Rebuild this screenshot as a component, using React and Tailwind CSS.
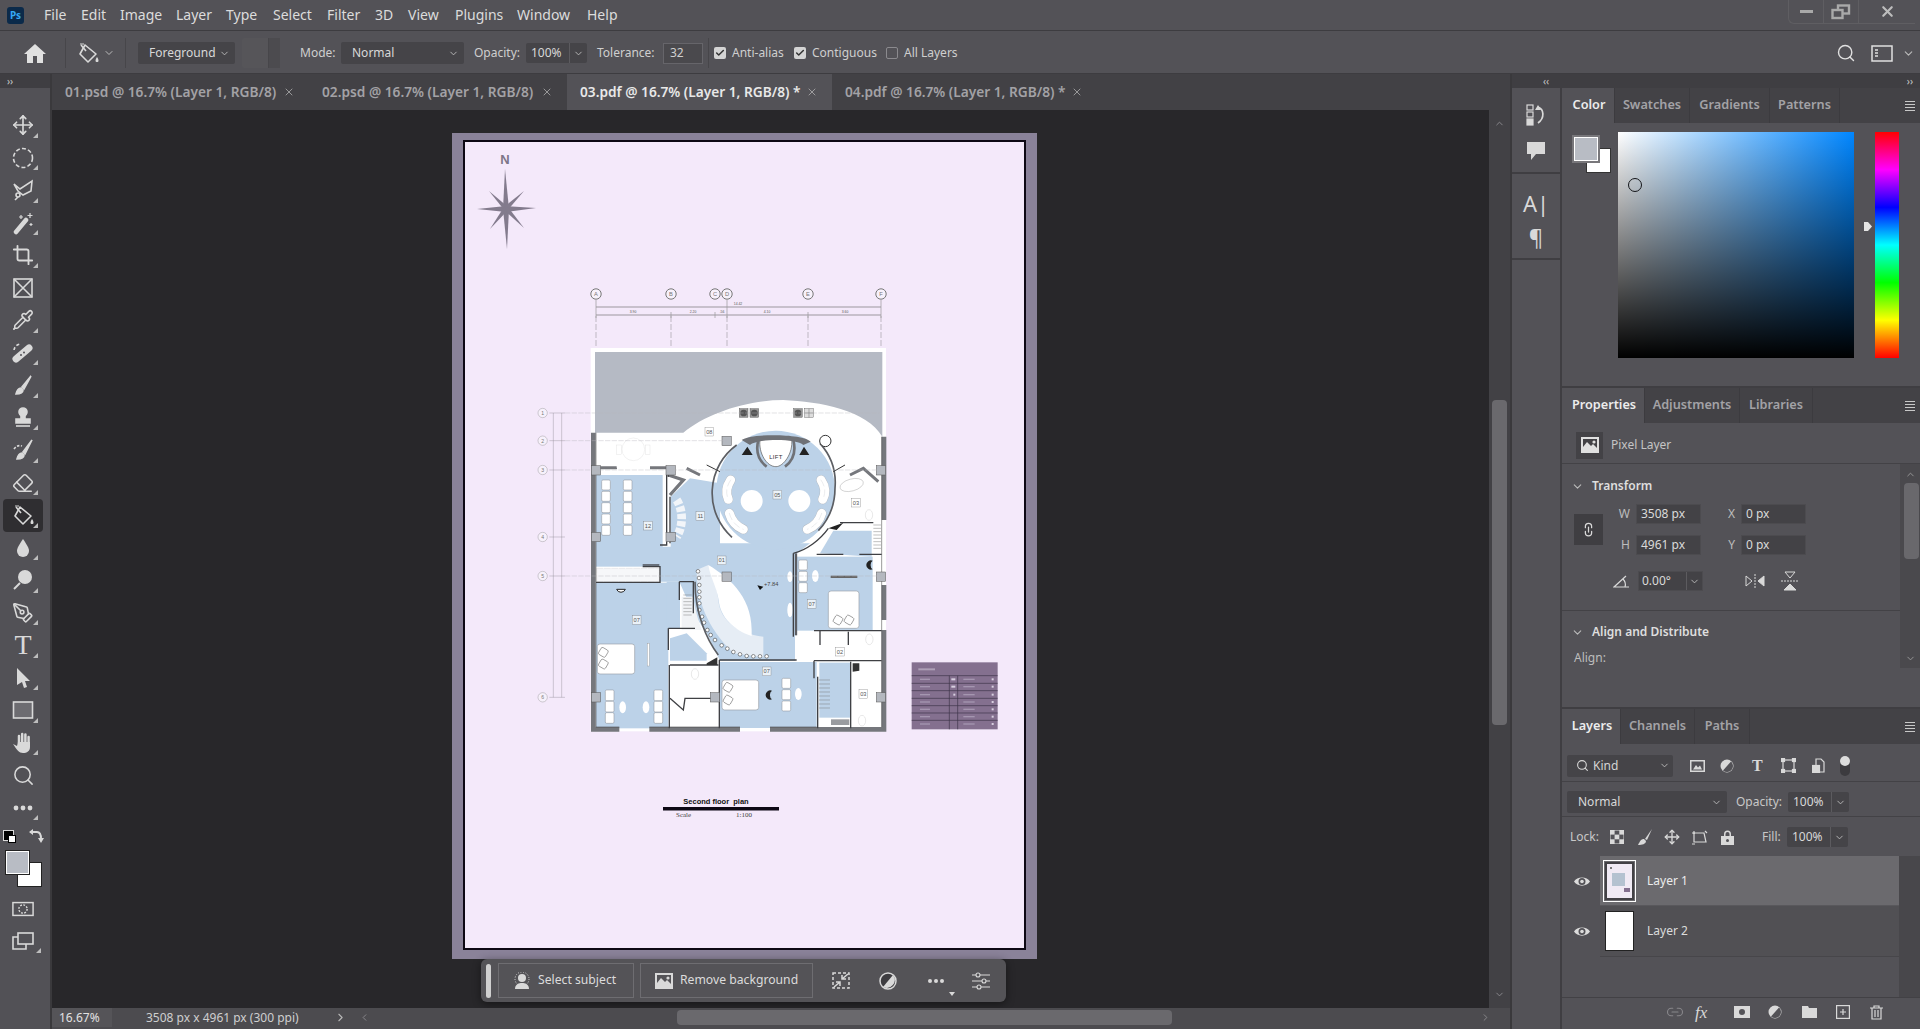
import React from "react";
import { ChevronDown, ChevronUp, ChevronLeft, ChevronRight, X, Move, Crop, Pipette, Eraser, PenTool, Search, Check, Link2 } from "lucide-react";

const menus = ["File", "Edit", "Image", "Layer", "Type", "Select", "Filter", "3D", "View", "Plugins", "Window", "Help"];

const Ic = ({ children, size = 24, view = "0 0 24 24", className = "" }) => (
  <svg width={size} height={size} viewBox={view} fill="none" stroke="#d9d9d9" strokeWidth="1.6" className={className}>
    {children}
  </svg>
);

const bucket = (
  <Ic>
    <path d="M9 4 L20 13 L12 21 L4 13 Z" strokeLinejoin="round" />
    <path d="M5 4 L10 10" />
    <path d="M4 3 L8 3" strokeWidth="1" />
    <path d="M21 16 C23 19 23 21 21 21 C19 21 19 19 21 16 Z" fill="#d9d9d9" stroke="none" />
  </Ic>
);

// left toolbar, top to bottom
const tools = [
  { icon: <Move size={22} color="#d9d9d9" strokeWidth={1.8} />, corner: true },
  { icon: <Ic><circle cx="12" cy="12" r="9.5" strokeDasharray="4 2.2" /></Ic>, corner: true },
  { icon: <Ic><path d="M3 6 L9 11 L21 3 L20 13 L12 17 L7 13 Z" /><circle cx="7" cy="17" r="2" /><path d="M7 19 L4 22" /></Ic>, corner: true },
  { icon: <Ic><path d="M5 21 L15 9" strokeWidth="4.5" strokeLinecap="round" /><path d="M10 4 L10 8 M8 6 L12 6 M19 2 L19 7 M16.5 4.5 L21.5 4.5 M20 12 L20 15 M18.5 13.5 L21.5 13.5" strokeWidth="1.2" /></Ic>, corner: true },
  { icon: <Crop size={22} color="#d9d9d9" strokeWidth={2} />, corner: true },
  { icon: <Ic><rect x="3" y="3" width="18" height="18" /><path d="M3 3 L21 21 M21 3 L3 21" /></Ic> },
  { icon: <Pipette size={22} color="#d9d9d9" strokeWidth={1.7} />, corner: true },
  { icon: <Ic><path d="M5 18 L18 7" strokeWidth="7" strokeLinecap="round" /><path d="M3 9 A7 7 0 0 1 10 3" strokeDasharray="3 2" /><circle cx="10" cy="14" r="1" fill="#525156" stroke="none" /><circle cx="13" cy="11.5" r="1" fill="#525156" stroke="none" /></Ic>, corner: true },
  { icon: <Ic><path d="M20 3 L11 14 L13 16 Z" fill="#d9d9d9" /><path d="M10 15 C7 15 6 17 5 21 C9 21 12 20 12 17 Z" fill="#d9d9d9" /></Ic>, corner: true },
  { icon: <Ic><circle cx="12" cy="6" r="4" fill="#d9d9d9" /><path d="M10 9 H14 V13 H19 V17 H5 V13 H10 Z" fill="#d9d9d9" /><path d="M5 20 H19" /></Ic>, corner: true },
  { icon: <Ic><path d="M21 2 L12 14 L14 16 Z" fill="#d9d9d9" /><path d="M11 15 C8 15 7 17 6 21 C10 21 13 20 13 17 Z" fill="#d9d9d9" /><path d="M3 11 C5 8 8 7 11 8" strokeDasharray="2.5 1.5" /></Ic>, corner: true },
  { icon: <Eraser size={22} color="#d9d9d9" strokeWidth={1.7} />, corner: true },
  { icon: bucket, corner: true, active: true },
  { icon: <Ic><path d="M12 3 C16 9 18 12 18 15 A6 6 0 0 1 6 15 C6 12 8 9 12 3 Z" fill="#d9d9d9" stroke="none" /></Ic>, corner: true },
  { icon: <Ic><circle cx="14" cy="9" r="7" fill="#d9d9d9" stroke="none" /><path d="M9 15 L3 21" strokeWidth="2" /></Ic>, corner: true },
  { icon: <PenTool size={22} color="#d9d9d9" strokeWidth={1.7} />, corner: true },
  { icon: <span className="font-['Liberation_Serif'] text-[28px] leading-none text-[#d9d9d9]">T</span>, corner: true },
  { icon: <Ic><path d="M6 2 L19 15 L14 15 L16 21 L13 22 L11 16 L6 19 Z" fill="#d9d9d9" stroke="none" /></Ic>, corner: true },
  { icon: <Ic><rect x="2.5" y="4" width="19" height="16" fill="#6d6c71" /></Ic>, corner: true },
  { icon: <Ic><path d="M8 12 V5 M11.2 11 V3 M14.4 11 V3.5 M17.6 12 V6" strokeWidth="2.5" strokeLinecap="round" /><path d="M2 13 L6 15 L7 11 H19 V16 C19 20 16 22 12 22 C8 22 6 19 2 13 Z" fill="#d9d9d9" stroke="none" /></Ic>, corner: true },
  { icon: <Search size={23} color="#d9d9d9" strokeWidth={1.6} /> },
  { icon: <Ic><circle cx="5" cy="12" r="2.4" fill="#d9d9d9" stroke="none" /><circle cx="12" cy="12" r="2.4" fill="#d9d9d9" stroke="none" /><circle cx="19" cy="12" r="2.4" fill="#d9d9d9" stroke="none" /></Ic>, corner: true },
];

const Corner = () => (
  <span className="absolute right-[5px] bottom-[4px] h-0 w-0 border-b-[5px] border-l-[5px] border-b-[#bdbdbd] border-l-transparent" />
);

const Toolbar = () => (
  <div className="flex w-[52px] shrink-0 flex-col border-r-2 border-[#3a393c] bg-[#525156]">
    <div className="flex h-[14px] items-center bg-[#3f3e42] pl-[7px] text-[10px] leading-none text-[#c8c8c8]">››</div>
    <div className="h-[21px]" />
    {tools.map((t, i) => (
      <div key={i} className={`relative ml-[3px] flex h-[32.5px] w-[40px] items-center justify-center ${t.active ? "rounded-sm bg-[#2f2e31]" : ""}`}>
        {t.icon}
        {t.corner && <Corner />}
      </div>
    ))}
    {/* colours */}
    <div className="relative h-[63px]">
      <span className="absolute left-[3px] top-[6px] h-[11px] w-[11px] border border-[#d9d9d9] bg-black" />
      <span className="absolute left-[8px] top-[11px] h-[8px] w-[8px] border border-black bg-white" />
      <svg className="absolute left-[28px] top-[4px]" width="16" height="16" viewBox="0 0 16 16" fill="none" stroke="#d9d9d9" strokeWidth="2">
        <path d="M2 4 H9 C12 4 13 7 13 11" />
        <path d="M1 4 L5 1 V7 Z M13 15 L10 10 H16 Z" fill="#d9d9d9" stroke="none" />
      </svg>
      <span className="absolute left-[18px] top-[39px] h-[23px] w-[23px] bg-white shadow-[0_0_0_1px_#222]" />
      <span className="absolute left-[6px] top-[27px] h-[23px] w-[23px] border border-white bg-[#b8bcc4] shadow-[0_0_0_1px_#222]" />
    </div>
    <div className="mt-[6px] flex h-[32px] w-[46px] items-center justify-center">
      <Ic size={22}><rect x="1" y="5" width="22" height="14" /><circle cx="12" cy="12" r="4.5" strokeDasharray="2 1.5" /></Ic>
    </div>
    <div className="relative flex h-[32px] w-[46px] items-center justify-center">
      <Ic size={24}><rect x="7" y="4" width="15" height="11" /><path d="M7 8 H2 V20 H15 V15" /></Ic>
      <Corner />
    </div>
  </div>
);

const Select = ({ className, children }) => (
  <div className={`flex items-center justify-between rounded-[2px] bg-[#454448] pl-[11px] pr-[5px] text-[12px] text-[#d8d8d8] ${className}`}>
    <span>{children}</span>
    <ChevronDown size={11} color="#bbb" />
  </div>
);

const Combo = ({ value, className = "" }) => (
  <div className={`flex h-[20px] items-center rounded-[2px] bg-[#454448] text-[12px] text-[#d8d8d8] ${className}`}>
    <span className="w-[43px] pl-[5px]">{value}</span>
    <span className="flex h-full w-[18px] items-center justify-center border-l border-[#5c5b5f]">
      <ChevronDown size={11} color="#bbb" />
    </span>
  </div>
);

const Box = ({ on, label, className }) => (
  <div className={`flex items-center gap-[6px] ${className}`}>
    <span className={`flex h-[12px] w-[12px] items-center justify-center rounded-[2px] ${on ? "bg-[#d4d4d4]" : "border border-[#8b8a8e]"}`}>
      {on && <Check size={10} color="#333" strokeWidth={3.5} />}
    </span>
    <span>{label}</span>
  </div>
);

const MenuBar = () => (
  <div className="flex h-[31px] shrink-0 items-center border-b border-[#3d3c40] bg-[#535257]">
    <div className="ml-[7px] flex h-[17px] w-[17px] items-center justify-center rounded-[3px] bg-[#0b2a4a] text-[10px] font-bold text-[#35a8f5]">Ps</div>
    <div className="ml-[20px] flex pb-[2px] text-[14px] text-[#dcdcdc]">
      <span className="w-[37px]">File</span>
      <span className="w-[39px]">Edit</span>
      <span className="w-[56px]">Image</span>
      <span className="w-[50px]">Layer</span>
      <span className="w-[47px]">Type</span>
      <span className="w-[54px]">Select</span>
      <span className="w-[48px]">Filter</span>
      <span className="w-[33px]">3D</span>
      <span className="w-[47px]">View</span>
      <span className="w-[62px]">Plugins</span>
      <span className="w-[70px]">Window</span>
      <span>{menus[11]}</span>
    </div>
    <div className="ml-auto mr-[5px] flex h-[24px] self-start rounded-bl-md border-b border-l border-[#5f5e62] text-[#bdbdbd]">
      <div className="flex w-[35px] items-center justify-center border-r border-[#5f5e62]"><span className="h-[3px] w-[13px] bg-[#a9a9a9]" /></div>
      <div className="flex w-[35px] items-center justify-center border-r border-[#5f5e62]">
        <svg width="20" height="16" viewBox="0 0 20 16" fill="none" stroke="#a9a9a9" strokeWidth="2.4"><rect x="7" y="1.5" width="11" height="8" /><rect x="1.5" y="6" width="10" height="8" fill="#535257" /></svg>
      </div>
      <div className="flex w-[56px] items-center justify-center"><X size={17} color="#bdbdbd" strokeWidth={3} /></div>
    </div>
  </div>
);

const OptionsBar = () => (
  <div className="flex h-[43px] shrink-0 items-center border-b border-[#3d3c40] bg-[#535257] pt-[2px] text-[12px] text-[#cfcfcf]">
    <div className="flex w-[66px] justify-center border-r border-[#47464a] py-[5px] pl-[4px]">
      <svg width="22" height="20" viewBox="0 0 22 20" fill="#e0e0e0"><path d="M11 1 L22 11 H19 V20 H13 V13 H9 V20 H3 V11 H0 Z" /></svg>
    </div>
    <div className="ml-[10px]">{bucket}</div>
    <ChevronDown size={12} color="#bbb" className="ml-[3px]" />
    <div className="ml-[10px] h-[30px] w-px bg-[#47464a]" />
    <Select className="ml-[12px] h-[22px] w-[97px]">Foreground</Select>
    <div className="ml-[7px] flex h-[30px] w-[38px] justify-end rounded-[2px] bg-[#565559]">
      <span className="w-[12px] border-l border-[#47464a] bg-[#4c4b4f]" />
    </div>
    <span className="ml-[20px] w-[41px]">Mode:</span>
    <Select className="h-[22px] w-[123px]">Normal</Select>
    <span className="ml-[10px] w-[52px]">Opacity:</span>
    <Combo value="100%" />
    <span className="ml-[10px] w-[66px]">Tolerance:</span>
    <div className="flex h-[21px] w-[40px] items-center border border-[#66656a] bg-[#4a494d] pl-[6px]">32</div>
    <div className="ml-[5px] h-[30px] w-px bg-[#47464a]" />
    <Box on label="Anti-alias" className="ml-[5px] w-[80px]" />
    <Box on label="Contiguous" className="w-[92px]" />
    <Box label="All Layers" />
    <Search size={20} color="#e0e0e0" strokeWidth={1.7} className="ml-auto mr-[15px]" />
    <svg width="22" height="17" viewBox="0 0 22 17" fill="none" stroke="#e0e0e0" strokeWidth="1.5" className="mr-[9px]"><rect x="1" y="1" width="20" height="15" /><path d="M4 5 H7 M4 8 H7 M4 11 H7" strokeWidth="1.6" /></svg>
    <ChevronDown size={13} color="#bbb" className="mr-[5px]" />
  </div>
);

const docTabs = [
  { name: "01.psd @ 16.7% (Layer 1, RGB/8)", w: "w-[257px]" },
  { name: "02.psd @ 16.7% (Layer 1, RGB/8)", w: "w-[258px]" },
  { name: "03.pdf @ 16.7% (Layer 1, RGB/8) *", w: "w-[265px]", active: true },
  { name: "04.pdf @ 16.7% (Layer 1, RGB/8) *", w: "w-[265px]" },
];

const DocTabs = () => (
  <div className="flex h-[36px] shrink-0 bg-[#424145] text-[13.7px] font-semibold">
    {docTabs.map((t) => (
      <div key={t.name} className={`flex items-center justify-between pl-[13px] pr-[14px] ${t.w} ${t.active ? "bg-[#535257] text-[#e8e8e8]" : "text-[#a3a2a6]"}`}>
        <span className="whitespace-nowrap">{t.name}</span>
        <X size={12} color="#b5b5b5" strokeWidth={1.5} />
      </div>
    ))}
  </div>
);

const wallLines = [
  "M228 205 H290 M390 205 H445 M445 205 V230 M440 225 V435 H420 M450 290 V430",
  "M228 547 H420 V500 H368 M420 500 V547 M478 545 V600 M478 545 H520 V640",
  "M445 685 H525 M445 685 V750 M448 795 V985 M450 795 H595 M598 780 H830 M598 780 V985",
  "M820 460 V710 M820 460 C860 450 900 420 925 385 M890 463 H970 M1018 463 H1085",
  "M882 692 H1085 M900 692 V735 M985 695 V735 M882 782 H1085 M882 782 V835 M893 830 V985 M992 785 V985",
  "M450 895 L490 930 L495 895 H575",
  "M368 495 H418",
  "M960 368 H1060",
];

const Sofa = ({ d }) => (
  <g fill="none" strokeLinecap="round">
    <path d={d} stroke="#b0b5bc" strokeWidth="29" />
    <path d={d} stroke="#fff" strokeWidth="27" />
    <path d={d} stroke="#d6d9dd" strokeWidth="1.5" strokeDasharray="20 12" />
  </g>
);

const Bed = ({ x, y, w, h, pillows }) => (
  <g>
    <rect x={x} y={y} width={w} height={h} rx="8" fill="#fff" stroke="#9aa0a8" strokeWidth="2" />
    {pillows.map((p, i) => (
      <rect key={i} x={p[0]} y={p[1]} width="24" height="24" rx="5" fill="#fff" stroke="#555" strokeWidth="1.5" transform={`rotate(30 ${p[0] + 12} ${p[1] + 12})`} />
    ))}
  </g>
);

const Chairs = ({ x, y, n, step = 34, w = 26, h = 30 }) => (
  <g fill="#fff" stroke="#8b9097" strokeWidth="1.6">
    {Array.from({ length: n }).map((_, i) => (
      <rect key={i} x={x} y={y + i * step} width={w} height={h} rx="4" />
    ))}
  </g>
);

const Col = ({ x, y, s = 28 }) => <rect x={x - s / 2} y={y - s / 2} width={s} height={s} fill="#b4b8bf" stroke="#555" strokeWidth="1.5" />;

const Label = ({ x, y, t }) => (
  <g>
    <rect x={x - 13} y={y - 13} width="26" height="26" fill="#fff" fillOpacity="0.7" stroke="#777" strokeWidth="1" />
    <text x={x} y={y + 6} textAnchor="middle" fontSize="17" fill="#555" fontFamily="Liberation Sans, sans-serif">{t}</text>
  </g>
);

const Bubble = ({ x, y, r = 13, t }) => (
  <g>
    <circle cx={x} cy={y} r={r} fill="#f7f1fb" stroke="#777" strokeWidth="1" />
    <text x={x} y={y + r * 0.4} textAnchor="middle" fontSize={r * 1.1} fill="#777" fontFamily="Liberation Sans, sans-serif">{t}</text>
  </g>
);

const FloorPlan = () => (
  <svg width="559" height="806" viewBox="465 142 559 806" className="block">
    <rect x="465" y="142" width="559" height="806" fill="#f4e9fa" />
    {/* north star */}
    <text x="505" y="164" textAnchor="middle" fontSize="13" fontWeight="700" fill="#7d7688" fontFamily="Liberation Sans, sans-serif">N</text>
    <g fill="#837b8d">
      <path d="M505 169 L509 209 L507 249 L503 209 Z" />
      <path d="M477 209 L506 206 L536 208 L506 212 Z" />
      <path d="M489 191 L508 207 L505 211 Z" />
      <path d="M524 191 L504 207 L507 211 Z" />
      <path d="M490 229 L504 207 L508 210 Z" />
      <path d="M524 228 L504 210 L508 207 Z" />
    </g>
    {/* column grid, top */}
    <g stroke="#a7a3ab" strokeWidth="0.7" fill="none">
      <path d="M596 307 H881 M596 315 H881" stroke="#777" />
      <path d="M596 316 V352 M671 316 V352 M727 316 V480 M808 316 V440 M881 316 V352" strokeDasharray="6 2" />
      <path d="M596 300 V318 M671 312 V318 M715 312 V318 M727 300 V318 M808 312 V318 M881 300 V318" stroke="#999" />
    </g>
    {[["A", 596], ["B", 671], ["C", 715], ["D", 727], ["E", 808], ["F", 881]].map((b) => (
      <Bubble key={b[0]} x={b[1]} y={294} r={5.2} t={b[0]} />
    ))}
    <g fontSize="3.4" fill="#555" fontFamily="Liberation Sans, sans-serif" textAnchor="middle">
      <text x="738" y="305">14.42</text>
      <text x="633" y="313">3.90</text>
      <text x="693" y="313">2.20</text>
      <text x="722" y="313">.56</text>
      <text x="767" y="313">4.10</text>
      <text x="845" y="313">3.60</text>
    </g>

    {/* plan traced in 3x coordinates of the crop */}
    <g transform="translate(520 400) scale(0.33333)">
      <rect x="212" y="-156" width="886" height="1150" fill="#fff" />
      <path d="M225 -144 H1087 V110 C1040 30 900 5 790 0 C680 0 560 40 490 98 H225 Z" fill="#b5bac4" />

      <g fill="#bcd2e8">
        <rect x="228" y="225" width="200" height="275" />
        <path d="M420 440 H452 V290 L510 235 L600 250 V430 H870 L825 465 V782 H600 L560 700 L520 640 L478 545 H420 Z" />
        <circle cx="767" cy="270" r="178" />
        <rect x="228" y="548" width="217" height="437" />
        <rect x="440" y="545" width="40" height="140" />
        <rect x="600" y="786" width="290" height="198" />
        <rect x="828" y="470" width="230" height="222" />
        <path d="M900 460 L940 392 H1055 V470 Z" />
        <rect x="898" y="788" width="92" height="165" />
        <path d="M450 715 L500 700 L560 760 V782 H450 Z" />
      </g>

      {/* white bits on the floor */}
      <rect x="230" y="505" width="188" height="40" fill="#f6f7f9" stroke="#ccc" strokeDasharray="20 2" />
      <path d="M485 590 H520 C525 630 535 660 545 690 H485 Z" fill="#f1f3f6" />
      <path d="M530 510 C530 600 560 680 640 760 L730 772 L730 710 C650 700 600 660 595 600 C590 560 580 520 565 495 Z" fill="#e6edf5" />
      <path d="M565 495 C640 540 700 600 695 708 C640 690 600 650 596 600 C590 560 570 530 565 495 Z" fill="#fff" />
      <path d="M720 118 H815 C820 160 790 200 768 200 C740 200 715 160 720 118 Z" fill="#fff" stroke="#555" strokeWidth="2" />
      <text x="768" y="178" textAnchor="middle" fontSize="18" fill="#333" fontFamily="Liberation Sans, sans-serif" letterSpacing="1">LIFT</text>
      <circle cx="695" cy="303" r="33" fill="#fff" />
      <circle cx="838" cy="303" r="33" fill="#fff" />
      <Sofa d="M632 240 Q612 270 625 298" />
      <Sofa d="M903 240 Q923 270 908 298" />
      <Sofa d="M628 340 Q638 375 670 388" />
      <Sofa d="M905 340 Q895 375 862 388" />
      <path d="M665 120 C690 100 850 100 872 125 L850 135 C830 115 710 115 690 135 Z" fill="#6f7176" />
      <path d="M715 120 C705 160 720 185 740 200 M820 120 C830 160 815 185 795 200" stroke="#6f7176" strokeWidth="8" fill="none" />
      <path d="M665 165 L682 140 L698 165 Z M838 165 L852 140 L868 165 Z" fill="#222" />
      <circle cx="340" cy="148" r="34" fill="#fff" stroke="#d8d8d8" />
      <rect x="290" y="135" width="14" height="28" fill="#fff" stroke="#d8d8d8" />
      <rect x="376" y="135" width="14" height="28" fill="#fff" stroke="#d8d8d8" />
      <ellipse cx="995" cy="255" rx="36" ry="18" transform="rotate(-15 995 255)" fill="#fff" stroke="#888" />
      <path d="M470 300 C490 330 490 380 470 410" stroke="#f2f5f9" strokeWidth="26" fill="none" strokeDasharray="16 6" />

      {/* beds and chairs */}
      <Bed x={232} y={732} w={112} h={90} pillows={[[238, 745], [238, 780]]} />
      <Bed x={925} y={573} w={92} h={112} pillows={[[942, 648], [975, 648]]} />
      <Bed x={606} y={840} w={110} h={90} pillows={[[612, 850], [612, 888]]} />
      <Chairs x={245} y={240} n={5} />
      <Chairs x={310} y={240} n={5} />
      <Chairs x={836} y={480} n={3} />
      <Chairs x={256} y={870} n={3} h={32} />
      <Chairs x={402} y={870} n={3} h={32} />
      <Chairs x={786} y={835} n={3} />
      <ellipse cx="308" cy="922" rx="10" ry="18" fill="#fff" />
      <ellipse cx="378" cy="922" rx="10" ry="18" fill="#fff" />
      <ellipse cx="835" cy="882" rx="10" ry="18" fill="#fff" />
      <ellipse cx="886" cy="528" rx="10" ry="18" fill="#fff" />
      <ellipse cx="810" cy="530" rx="8" ry="16" fill="#fff" />
      <ellipse cx="810" cy="630" rx="8" ry="22" fill="#fff" />
      <rect x="382" y="730" width="6" height="68" fill="#fff" stroke="#888" />
      <path d="M290 568 A14 14 0 0 0 316 568 Z" fill="#fff" stroke="#222" strokeWidth="3" />
      <path d="M1058 482 A14 14 0 1 0 1058 508 A10 14 0 0 1 1058 482 Z" fill="#222" />
      <path d="M756 872 A14 14 0 1 0 756 898 A10 14 0 0 1 756 872 Z" fill="#222" />
      <rect x="933" y="958" width="55" height="17" fill="#9a9ca0" />
      <rect x="932" y="527" width="80" height="7" fill="#666" />
      <g fill="#fff" stroke="#bbb">
        <ellipse cx="1047" cy="345" rx="11" ry="16" />
        <ellipse cx="1048" cy="718" rx="11" ry="16" />
        <ellipse cx="525" cy="822" rx="11" ry="16" />
        <ellipse cx="1026" cy="962" rx="11" ry="16" />
      </g>
      <g stroke="#777" strokeWidth="1.4">
        <path d="M490 585 H515 M490 595 H515 M490 605 H515 M490 615 H515 M490 625 H515 M490 635 H515 M490 645 H515" />
        <path d="M1060 375 H1083 M1060 385 H1083 M1060 395 H1083 M1060 405 H1083 M1060 415 H1083 M1060 425 H1083 M1060 435 H1083 M1060 445 H1083" />
        <path d="M897 840 H930 M897 852 H930 M897 864 H930 M897 876 H930 M897 888 H930 M897 900 H930 M897 912 H930 M897 924 H930" />
      </g>

      {/* stair treads */}
      <g fill="#fff" stroke="#333" strokeWidth="1.6">
        {[[534, 514], [537, 534], [538, 555], [538, 575], [538, 592], [538, 610], [538, 630], [546, 650], [552, 668], [562, 690], [572, 705], [585, 720], [605, 736], [622, 746], [640, 756], [660, 763], [680, 768], [700, 769], [720, 769], [740, 769]].map((p, i) => (
          <circle key={i} cx={p[0]} cy={p[1]} r="5.5" />
        ))}
      </g>

      {/* walls */}
      <g fill="none" stroke="#75777c">
        <path d="M220 98 V988 H298 M388 988 H660 M750 988 H1092 V690 M1092 660 V555 M1092 110 V360" strokeWidth="14" />
        <path d="M228 98 V981 M1085 110 V981" stroke="#333" strokeWidth="1.5" />
        <path d="M228 981 H298 M388 981 H660 M750 981 H890" stroke="#333" strokeWidth="1.5" />
        <path d="M636 412 A178 178 0 0 1 650 135" strokeWidth="5" stroke="#5c5e63" />
        <path d="M900 130 A178 178 0 0 1 945 265 C945 320 925 360 895 392" strokeWidth="5" stroke="#5c5e63" />
        <path d="M525 545 C525 640 560 720 595 765" strokeWidth="5" stroke="#5c5e63" />
        <path d="M445 225 L490 240 L450 285" strokeWidth="10" />
        <path d="M500 205 L540 225 M990 225 L1030 205 L1075 245" strokeWidth="9" />
        <path d="M560 195 L600 215 M940 215 L975 195" strokeWidth="3" stroke="#333" />
        {wallLines.map((d) => (
          <path key={d} d={d} stroke="#3f4044" strokeWidth="4" />
        ))}
        <path d="M828 460 V706" strokeWidth="7" stroke="#5c5e63" />
        <path d="M240 203 H290 M390 203 H440" strokeWidth="9" />
      </g>
      <path d="M925 385 L970 368 L950 390 Z" fill="#222" />
      <path d="M560 790 L592 772 V795 H560 Z" fill="#333" />
      <path d="M998 790 H1018 V812 L998 815 Z" fill="#333" />

      {[[228, 211], [452, 211], [228, 411], [452, 411], [620, 123], [620, 530], [228, 892], [585, 892], [1083, 211], [1083, 530], [1083, 892]].map((p, i) => (
        <Col key={i} x={p[0]} y={p[1]} />
      ))}
      <circle cx="916" cy="123" r="17" fill="#fff" stroke="#333" strokeWidth="3" />
      <g fill="#999" stroke="#333" strokeWidth="1">
        <rect x="658" y="26" width="26" height="26" />
        <rect x="690" y="26" width="26" height="26" />
        <rect x="821" y="26" width="26" height="26" />
      </g>
      <g fill="#555">
        <circle cx="671" cy="39" r="10" />
        <circle cx="703" cy="39" r="10" />
        <circle cx="834" cy="39" r="10" />
      </g>
      <rect x="854" y="26" width="26" height="26" fill="#ddd" stroke="#333" />
      <path d="M867 26 V52 M854 39 H880" stroke="#333" />

      {[[568, 95, "08"], [772, 284, "05"], [1008, 308, "03"], [541, 348, "11"], [384, 377, "12"], [605, 481, "01"], [350, 660, "07"], [875, 612, "07"], [960, 755, "02"], [740, 814, "07"], [1030, 882, "03"]].map((l, i) => (
        <Label key={i} x={l[0]} y={l[1]} t={l[2]} />
      ))}
      <text x="732" y="557" fontSize="17" fill="#444" fontFamily="Liberation Sans, sans-serif">+7.84</text>
      <path d="M712 556 L730 560 L720 570 Z" fill="#111" />

      {/* row grid */}
      <g stroke="#8f8b95" strokeWidth="1.2" fill="none">
        <path d="M100 39 V892 M125 39 V892 M88 39 H135 M88 122 H135 M88 210 H135 M88 411 H135 M88 528 H135 M88 892 H135" />
        <path d="M135 39 H1080 M135 122 H620 M135 210 H1075 M135 528 H1075" strokeDasharray="16 4" stroke="#b9b5bd" />
      </g>
      {[[39, "1"], [122, "2"], [210, "3"], [411, "4"], [528, "5"], [892, "6"]].map((r) => (
        <Bubble key={r[1]} x={68} y={r[0]} r={14} t={r[1]} />
      ))}

      {/* schedule */}
      <rect x="1175" y="787" width="258" height="201" fill="#84708f" />
      <g stroke="#3d3348" strokeWidth="2">
        <path d="M1175 827 H1433 M1175 850 H1433 M1175 872 H1433 M1175 895 H1433 M1175 917 H1433 M1175 939 H1433 M1175 961 H1433" />
        <path d="M1288 827 V988 M1313 827 V988" />
      </g>
      <g fill="#d8cfe0">
        <rect x="1195" y="805" width="50" height="6" opacity="0.5" />
        {[838, 860, 884, 906, 928, 950, 972].map((y) => (
          <g key={y}>
            <rect x="1200" y={y - 2} width="30" height="4" opacity="0.4" />
            <rect x="1330" y={y - 2} width="34" height="4" opacity="0.4" />
            <rect x="1415" y={y - 3} width="6" height="6" />
          </g>
        ))}
        <rect x="1294" y="835" width="12" height="6" />
        <rect x="1294" y="857" width="12" height="6" />
        <rect x="1300" y="881" width="6" height="6" />
      </g>
    </g>

    {/* caption */}
    <text x="716" y="804" textAnchor="middle" fontSize="7.5" fontWeight="700" fill="#111" fontFamily="Liberation Sans, sans-serif" xmlSpace="preserve">Second floor  plan</text>
    <rect x="663" y="807" width="116" height="3.5" fill="#0d0814" />
    <text x="676" y="817" fontSize="7" fill="#444" fontFamily="Liberation Serif, serif">Scale</text>
    <text x="736" y="817" fontSize="7" fill="#444" fontFamily="Liberation Serif, serif">1:100</text>
  </svg>
);

const TaskBar = () => (
  <div className="absolute left-[429px] top-[849px] flex h-[43px] w-[525px] items-center rounded-md bg-[#545357] pl-[5px] text-[12.2px] text-[#dcdcdc] shadow-[0_2px_8px_rgba(0,0,0,0.45)]">
    <span className="h-[34px] w-[5px] rounded-sm bg-[#cfcfcf]" />
    <div className="ml-[7px] flex h-[35px] w-[136px] items-center gap-[7px] border border-[#6e6d71] pl-[14px]">
      <svg width="18" height="18" viewBox="0 0 18 18" fill="#d9d9d9"><circle cx="9" cy="6" r="4" /><path d="M2 17 C2 12 6 11 9 11 C12 11 16 12 16 17 Z" /><circle cx="9" cy="7" r="7" fill="none" stroke="#d9d9d9" strokeDasharray="1 1.6" /></svg>
      <span className="whitespace-nowrap">Select subject</span>
    </div>
    <div className="ml-[6px] flex h-[35px] w-[173px] items-center gap-[7px] border border-[#6e6d71] pl-[14px]">
      <svg width="18" height="16" viewBox="0 0 18 16" fill="#d9d9d9"><path d="M0 0 H18 V16 H0 Z M2 10 L6 5 L10 9 L12 7 L16 11 V2 H2 Z" fillRule="evenodd" /><circle cx="13" cy="5" r="1.6" /></svg>
      <span className="whitespace-nowrap">Remove background</span>
    </div>
    <svg className="ml-[19px]" width="18" height="17" viewBox="0 0 18 17" fill="none" stroke="#d9d9d9" strokeWidth="1.5"><rect x="1" y="1" width="16" height="15" strokeDasharray="3 2" /><path d="M16 2 L10 7 M10 3 V7 H14 M2 15 L8 10 M4 10 H8 V14" /></svg>
    <svg className="ml-[29px]" width="18" height="18" viewBox="0 0 18 18"><circle cx="9" cy="9" r="8" fill="#3e3d41" stroke="#d9d9d9" strokeWidth="1.5" /><path d="M14 3 A8 8 0 0 1 4 15 Z" fill="#d9d9d9" /></svg>
    <svg className="ml-[30px]" width="18" height="6" viewBox="0 0 18 6" fill="#d9d9d9"><circle cx="3" cy="3" r="2" /><circle cx="9" cy="3" r="2" /><circle cx="15" cy="3" r="2" /></svg>
    <span className="ml-[4px] mt-[26px] h-0 w-0 border-x-[3px] border-t-[4px] border-x-transparent border-t-[#d9d9d9]" />
    <svg className="ml-[16px]" width="20" height="18" viewBox="0 0 20 18" fill="none" stroke="#d9d9d9" strokeWidth="1.1"><path d="M1 3 H19 M1 9 H19 M1 15 H19" /><circle cx="7" cy="3" r="2" fill="#545357" /><circle cx="13" cy="9" r="2" fill="#545357" /><circle cx="8" cy="15" r="2" fill="#545357" /></svg>
  </div>
);

const Canvas = () => (
  <div className="flex min-h-0 flex-1">
    <div className="relative flex-1 overflow-hidden bg-[#28272a]">
      <div className="ml-[400px] mt-[23px] w-[585px] bg-[#8a8299] pb-[9px] pl-[11px] pr-[11px] pt-[7px]">
        <div className="border-2 border-[#0d0814]">
          <FloorPlan />
        </div>
      </div>
      <TaskBar />
    </div>
    <div className="flex w-[21px] flex-col items-center bg-[#424145] py-[8px]">
      <ChevronUp size={11} color="#8c8b8f" />
      <div className="mt-[271px] h-[325px] w-[15px] rounded-sm bg-[#6a696d]" />
      <ChevronDown size={11} color="#8c8b8f" className="mt-auto" />
    </div>
  </div>
);

const StatusBar = () => (
  <div className="flex h-[21px] shrink-0 items-center bg-[#4c4b4f] pb-[2px] text-[12px] text-[#cfcfcf]">
    <span className="flex h-full w-[60px] items-center bg-[#555458] pl-[7px] text-[#e2e2e2]">16.67%</span>
    <span className="ml-[34px] whitespace-nowrap">3508 px x 4961 px (300 ppi)</span>
    <ChevronRight size={13} color="#b5b5b5" className="ml-[35px]" />
    <ChevronLeft size={11} color="#8c8b8f" className="ml-[12px]" />
    <div className="ml-[307px] h-[15px] w-[495px] rounded-sm bg-[#6a696d]" />
    <ChevronRight size={11} color="#8c8b8f" className="ml-[308px]" />
  </div>
);

const Dock = () => (
  <div className="flex w-[48px] shrink-0 flex-col bg-[#535257]">
    <div className="flex h-[86px] flex-col items-center justify-end gap-[15px] border-b-2 border-[#3f3e42] pb-[11px]">
      <svg width="20" height="22" viewBox="0 0 20 22" fill="none" stroke="#d9d9d9" strokeWidth="1.2">
        <rect x="1" y="1" width="6" height="5" />
        <rect x="1" y="8" width="6" height="5" />
        <rect x="1" y="15" width="6" height="6" fill="#d9d9d9" />
        <path d="M12 3 C18 5 19 14 12 19" strokeWidth="1.7" />
        <path d="M9 6 L12 1 L15 6 Z" fill="#d9d9d9" stroke="none" />
      </svg>
      <svg width="20" height="20" viewBox="0 0 20 20" fill="#d9d9d9"><path d="M1 1 H19 V13 H10 L5 19 V13 H1 Z" /></svg>
    </div>
    <div className="flex h-[86px] flex-col items-center justify-end border-b-2 border-[#3f3e42] pb-[7px]">
      <span className="mb-[3px] text-[22px] leading-[30px] text-[#d9d9d9]">A|</span>
      <span className="text-[22px] leading-[30px] text-[#d9d9d9]">¶</span>
    </div>
  </div>
);

const PanelTabs = ({ tabs }) => (
  <div className="flex h-[35px] shrink-0 items-stretch bg-[#434246] text-[12.7px] font-semibold">
    {tabs.map((t, i) => (
      <div key={t.n} className={`flex items-center justify-center border-r border-[#3c3b3f] pb-[2px] ${t.w} ${i === 0 ? "bg-[#535257] pl-[2px] text-[#ececec]" : "text-[#a3a2a6]"}`}>
        {t.n}
      </div>
    ))}
    <div className="ml-auto mr-[5px] flex flex-col justify-center gap-[2px]">
      <span className="h-px w-[10px] bg-[#c8c8c8]" />
      <span className="h-px w-[10px] bg-[#c8c8c8]" />
      <span className="h-px w-[10px] bg-[#c8c8c8]" />
      <span className="h-px w-[10px] bg-[#c8c8c8]" />
    </div>
  </div>
);

const ColorPanel = () => (
  <div className="flex h-[300px] shrink-0 flex-col border-b-2 border-[#3f3e42]">
    <PanelTabs tabs={[{ n: "Color", w: "w-[53px]" }, { n: "Swatches", w: "w-[75px]" }, { n: "Gradients", w: "w-[80px]" }, { n: "Patterns", w: "w-[70px]" }]} />
    <div className="flex flex-1 pt-[9px]">
      <div className="relative ml-[10px] w-[46px]">
        <span className="absolute left-[15px] top-[17px] h-[23px] w-[23px] bg-white shadow-[0_0_0_1px_#333]" />
        <span className="absolute left-0 top-[3px] h-[28px] w-[28px] border-2 border-[#78777b] bg-[#b8bcc4] shadow-[inset_0_0_0_1px_#fff]" />
      </div>
      <div className="relative h-[226px] w-[236px] bg-[linear-gradient(to_top,#000,rgba(0,0,0,0)),linear-gradient(to_right,#fff,#0086ff)]">
        <span className="absolute left-[10px] top-[46px] h-[14px] w-[14px] rounded-full border border-[#15161a]" />
      </div>
      <div className="relative ml-[21px] h-[226px] w-[24px] bg-[linear-gradient(to_bottom,#f00,#f0f,#00f,#0ff,#0f0,#ff0,#f00)]">
        <svg className="absolute left-[-12px] top-[90px]" width="9" height="9" viewBox="0 0 9 9" fill="#e4e4e4"><path d="M1 0 H5 L9 4.5 L5 9 H1 Z" /></svg>
      </div>
    </div>
  </div>
);

const Field = ({ label, value, className = "" }) => (
  <div className={`flex items-center ${className}`}>
    <span className="w-[18px] text-right text-[#bdbdbd]">{label}</span>
    <span className="ml-[6px] flex h-[20px] w-[65px] items-center border border-[#4c4b4f] bg-[#434246] pl-[4px] text-[#dadada]">{value}</span>
  </div>
);

const PropertiesPanel = () => (
  <div className="flex h-[321px] shrink-0 flex-col border-b-2 border-[#3f3e42] text-[12px]">
    <PanelTabs tabs={[{ n: "Properties", w: "w-[83px]" }, { n: "Adjustments", w: "w-[95px]" }, { n: "Libraries", w: "w-[73px]" }]} />
    <div className="flex h-[41px] shrink-0 items-center border-b border-[#434246] pl-[14px] pt-[4px] text-[#c4c4c4]">
      <span className="flex h-[27px] w-[27px] items-center justify-center bg-[#434246]">
        <svg width="18" height="16" viewBox="0 0 18 16" fill="#e0e0e0"><path d="M0 0 H18 V16 H0 Z M2 10 L6 5 L10 9 L12 7 L16 11 V2 H2 Z" fillRule="evenodd" /><circle cx="13" cy="5" r="1.6" /></svg>
      </span>
      <span className="ml-[8px]">Pixel Layer</span>
    </div>
    <div className="flex min-h-0 flex-1">
      <div className="min-w-0 flex-1">
        <div className="border-b border-[#434246] pb-[19px]">
          <div className="flex h-[40px] items-center pl-[9px] pt-[4px] font-semibold text-[#dedede]">
            <ChevronDown size={13} color="#bbb" />
            <span className="ml-[8px]">Transform</span>
          </div>
          <div className="flex items-center pl-[12px]">
            <span className="flex h-[31px] w-[29px] items-center justify-center bg-[#3f3e42]">
              <Link2 size={15} color="#d9d9d9" className="rotate-90" />
            </span>
            <div className="ml-[9px] flex flex-col gap-[11px]">
              <div className="flex">
                <Field label="W" value="3508 px" />
                <Field label="X" value="0 px" className="ml-[16px]" />
              </div>
              <div className="flex">
                <Field label="H" value="4961 px" />
                <Field label="Y" value="0 px" className="ml-[16px]" />
              </div>
            </div>
          </div>
          <div className="mt-[16px] flex items-center pl-[51px]">
            <svg width="17" height="14" viewBox="0 0 17 14" fill="none" stroke="#d9d9d9" strokeWidth="1.2"><path d="M16 13 H1 L13 2" /><path d="M10 5 A8 8 0 0 1 12 13" /></svg>
            <span className="ml-[8px] flex h-[20px] w-[65px] items-center border border-[#4c4b4f] bg-[#434246] text-[#dadada]">
              <span className="w-[47px] pl-[3px]">0.00°</span>
              <span className="flex h-full flex-1 items-center justify-center border-l border-[#5c5b5f]"><ChevronDown size={11} color="#bbb" /></span>
            </span>
            <svg className="ml-[42px]" width="20" height="14" viewBox="0 0 20 14" fill="none" stroke="#d9d9d9"><path d="M10 0 V14" strokeDasharray="2 1" /><path d="M1 2 L7 7 L1 12 Z" /><path d="M19 2 L13 7 L19 12 Z" fill="#d9d9d9" /></svg>
            <svg className="ml-[16px]" width="18" height="20" viewBox="0 0 18 20" fill="none" stroke="#d9d9d9"><path d="M0 10 H18" strokeDasharray="2 1" /><path d="M4 1 H14 L9 7 Z" /><path d="M3 19 H15 L9 13 Z" fill="#d9d9d9" /></svg>
          </div>
        </div>
        <div className="flex h-[40px] items-center pl-[9px] pt-[2px] font-semibold text-[#dedede]">
          <ChevronDown size={13} color="#bbb" />
          <span className="ml-[8px]">Align and Distribute</span>
        </div>
        <div className="mt-[-2px] pl-[12px] text-[#bdbdbd]">Align:</div>
      </div>
      <div className="flex h-[204px] w-[20px] shrink-0 flex-col items-center bg-[#4a494d] pt-[5px]">
        <ChevronUp size={11} color="#9a9a9a" />
        <div className="ml-[3px] mt-[3px] h-[76px] w-[15px] rounded-sm bg-[#69686c]" />
        <ChevronDown size={11} color="#9a9a9a" className="mt-auto mb-[4px]" />
      </div>
    </div>
  </div>
);

const Eye = () => (
  <svg width="16" height="11" viewBox="0 0 16 11" fill="#dcdcdc"><path fillRule="evenodd" d="M0 5.5 C3 0 13 0 16 5.5 C13 11 3 11 0 5.5 Z M8 2 A3.5 3.5 0 1 0 8 9 A3.5 3.5 0 1 0 8 2 Z" /><circle cx="8" cy="5.5" r="1.8" /></svg>
);

const LayersPanel = () => (
  <div className="flex min-h-0 flex-1 flex-col text-[12px] text-[#d4d4d4]">
    <PanelTabs tabs={[{ n: "Layers", w: "w-[59px]" }, { n: "Channels", w: "w-[74px]" }, { n: "Paths", w: "w-[55px]" }]} />
    <div className="flex h-[38px] shrink-0 items-center border-b border-[#434246] pl-[5px] pt-[6px]">
      <div className="flex h-[22px] w-[106px] items-center rounded-[2px] bg-[#454448] pl-[9px]">
        <Search size={13} color="#d9d9d9" strokeWidth={2} />
        <span className="ml-[4px]">Kind</span>
        <ChevronDown size={11} color="#bbb" className="ml-auto mr-[3px]" />
      </div>
      <svg className="ml-[17px]" width="15" height="12" viewBox="0 0 15 12" fill="#d9d9d9"><path fillRule="evenodd" d="M0 0 H15 V12 H0 Z M1.5 1.5 V10.5 H13.5 V1.5 Z" /><path d="M3 9.5 L6 5 L8 7.5 L10 5.5 L12 9.5 Z" /></svg>
      <svg className="ml-[15px]" width="14" height="14" viewBox="0 0 14 14"><circle cx="7" cy="7" r="6.5" fill="#d9d9d9" /><path d="M11 2.5 A6 6 0 0 1 3 11.5 Z" fill="#535257" /></svg>
      <span className="ml-[18px] w-[14px] font-['Liberation_Serif'] text-[16px] font-bold leading-none text-[#d9d9d9]">T</span>
      <svg className="ml-[15px]" width="15" height="15" viewBox="0 0 15 15" fill="none" stroke="#d9d9d9" strokeWidth="1.2"><rect x="2" y="2" width="11" height="11" /><rect x="0.5" y="0.5" width="3" height="3" fill="#d9d9d9" /><rect x="11.5" y="0.5" width="3" height="3" fill="#d9d9d9" /><rect x="0.5" y="11.5" width="3" height="3" fill="#d9d9d9" /><rect x="11.5" y="11.5" width="3" height="3" fill="#d9d9d9" /></svg>
      <svg className="ml-[16px]" width="13" height="15" viewBox="0 0 13 15" fill="none" stroke="#d9d9d9" strokeWidth="1.2"><path d="M4 1 H9 L12 4 V14 H4 Z" /><rect x="0.5" y="7.5" width="7" height="7" fill="#d9d9d9" /></svg>
      <div className="ml-[15px] flex h-[20px] w-[10px] flex-col rounded-full bg-[#3c3b3f]">
        <span className="h-[10px] w-[10px] rounded-full bg-[#dcdcdc]" />
      </div>
    </div>
    <div className="flex h-[35px] shrink-0 items-center border-b border-[#434246] pl-[5px] pt-[6px]">
      <Select className="h-[22px] w-[160px]">Normal</Select>
      <span className="ml-[9px] w-[52px] text-[#c8c8c8]">Opacity:</span>
      <Combo value="100%" />
    </div>
    <div className="flex h-[39px] shrink-0 items-center pl-[8px] pt-[1px]">
      <span className="w-[40px] text-[#c8c8c8]">Lock:</span>
      <svg width="14" height="14" viewBox="0 0 14 14" fill="#d9d9d9"><rect width="14" height="14" fill="none" stroke="#d9d9d9" /><rect x="0" y="0" width="4.6" height="4.6" /><rect x="9.3" y="0" width="4.7" height="4.6" /><rect x="4.6" y="4.6" width="4.7" height="4.7" /><rect x="0" y="9.3" width="4.6" height="4.7" /><rect x="9.3" y="9.3" width="4.7" height="4.7" /></svg>
      <svg className="ml-[13px]" width="16" height="16" viewBox="0 0 16 16" fill="#d9d9d9"><path d="M15 0 L8 10 L10 11 Z" /><path d="M7 10 C4 10 3 12 1 16 C5 16 9 15 9 12 Z" /></svg>
      <Move size={16} color="#d9d9d9" strokeWidth={2} className="ml-[11px]" />
      <svg className="ml-[11px]" width="17" height="15" viewBox="0 0 17 15" fill="none" stroke="#d9d9d9" strokeWidth="1.2"><path d="M3 3 H13 L15 12 H3 Z" /><path d="M1 3 H4 M3 1 V4 M1 14 H4 M14 1 L16 3" /></svg>
      <svg className="ml-[13px]" width="13" height="15" viewBox="0 0 13 15" fill="#d9d9d9"><path d="M3 6 V4 A3.5 3.5 0 0 1 10 4 V6 H8.5 V4 A2 2 0 0 0 4.5 4 V6 Z" /><path fillRule="evenodd" d="M0 6 H13 V15 H0 Z M6.5 9 A1.5 1.5 0 1 0 6.5 12 A1.5 1.5 0 1 0 6.5 9 Z" /></svg>
      <span className="ml-[28px] w-[25px] text-[#c8c8c8]">Fill:</span>
      <Combo value="100%" />
    </div>
    <div className="flex min-h-0 flex-1">
      <div className="flex-1">
        <div className="flex h-[50px] items-center">
          <span className="flex w-[38px] justify-center pl-[2px]"><Eye /></span>
          <div className="flex h-full flex-1 items-center border-b border-[#59585c] bg-[#6b6a6e] pl-[5px]">
            <div className="relative h-[38px] w-[29px] border-2 border-[#424145] bg-[#f0eaf4] outline-1 outline-offset-1 outline-white">
              <span className="absolute left-[5px] top-[9px] h-[13px] w-[13px] bg-[#b4c2d0]" />
              <span className="absolute left-[17px] top-[24px] h-[4px] w-[6px] bg-[#84708f]" />
              <span className="absolute left-[3px] top-[3px] h-[2px] w-[2px] bg-[#777]" />
            </div>
            <span className="ml-[13px] text-[#ececec]">Layer 1</span>
          </div>
        </div>
        <div className="flex h-[51px] items-center">
          <span className="flex w-[38px] justify-center pl-[2px]"><Eye /></span>
          <div className="flex h-full flex-1 items-center border-b border-[#47464a] bg-[#515054] pl-[5px]">
            <div className="h-[40px] w-[29px] border border-[#222] bg-white" />
            <span className="ml-[13px] text-[#dcdcdc]">Layer 2</span>
          </div>
        </div>
      </div>
      <div className="w-[21px] bg-[#48474b]" />
    </div>
    <div className="flex h-[32px] shrink-0 items-center border-t border-[#424145] pb-[3px] pl-[104px]">
      <Link2 size={18} color="#88878b" strokeWidth={1.5} />
      <span className="ml-[11px] w-[22px] font-['Liberation_Serif'] text-[17px] italic leading-none text-[#d9d9d9]">fx</span>
      <svg className="ml-[17px]" width="16" height="12" viewBox="0 0 16 12" fill="#d9d9d9"><path fillRule="evenodd" d="M0 0 H16 V12 H0 Z M8 3 A3 3 0 1 0 8 9 A3 3 0 1 0 8 3 Z" /></svg>
      <svg className="ml-[18px]" width="14" height="14" viewBox="0 0 14 14"><circle cx="7" cy="7" r="6.5" fill="#d9d9d9" /><path d="M11 2.5 A6 6 0 0 1 3 11.5 Z" fill="#535257" /></svg>
      <svg className="ml-[20px]" width="15" height="12" viewBox="0 0 15 12" fill="#d9d9d9"><path d="M0 0 H6 L7 2 H15 V12 H0 Z" /></svg>
      <svg className="ml-[19px]" width="14" height="14" viewBox="0 0 14 14" fill="none" stroke="#d9d9d9" strokeWidth="1.2"><rect x="0.6" y="0.6" width="12.8" height="12.8" /><path d="M7 4 V10 M4 7 H10" /></svg>
      <svg className="ml-[20px]" width="13" height="15" viewBox="0 0 13 15" fill="none" stroke="#d9d9d9" strokeWidth="1.2"><path d="M0 3 H13 M4 3 V1 H9 V3 M2 3 V14 H11 V3 M5 5 V12 M8 5 V12" /></svg>
    </div>
  </div>
);

const RightSide = () => (
  <div className="flex w-[410px] shrink-0 flex-col border-l-2 border-[#3a393c]">
    <div className="flex h-[14px] shrink-0 items-center justify-between bg-[#3f3e42] pl-[31px] pr-[7px] text-[10px] leading-none text-[#c8c8c8]">
      <span>‹‹</span>
      <span>››</span>
    </div>
    <div className="flex min-h-0 flex-1 bg-[#3f3e42]">
      <Dock />
      <div className="flex w-[360px] shrink-0 flex-col border-l-2 border-[#3f3e42] bg-[#535257]">
        <ColorPanel />
        <PropertiesPanel />
        <LayersPanel />
      </div>
    </div>
  </div>
);

export default function App() {
  return (
    <div className="flex h-[1029px] w-[1920px] flex-col overflow-hidden bg-[#535257] font-['Noto_Sans',sans-serif]">
      <MenuBar />
      <OptionsBar />
      <div className="flex min-h-0 flex-1">
        <Toolbar />
        <div className="flex min-w-0 flex-1 flex-col">
          <DocTabs />
          <Canvas />
          <StatusBar />
        </div>
        <RightSide />
      </div>
    </div>
  );
}
